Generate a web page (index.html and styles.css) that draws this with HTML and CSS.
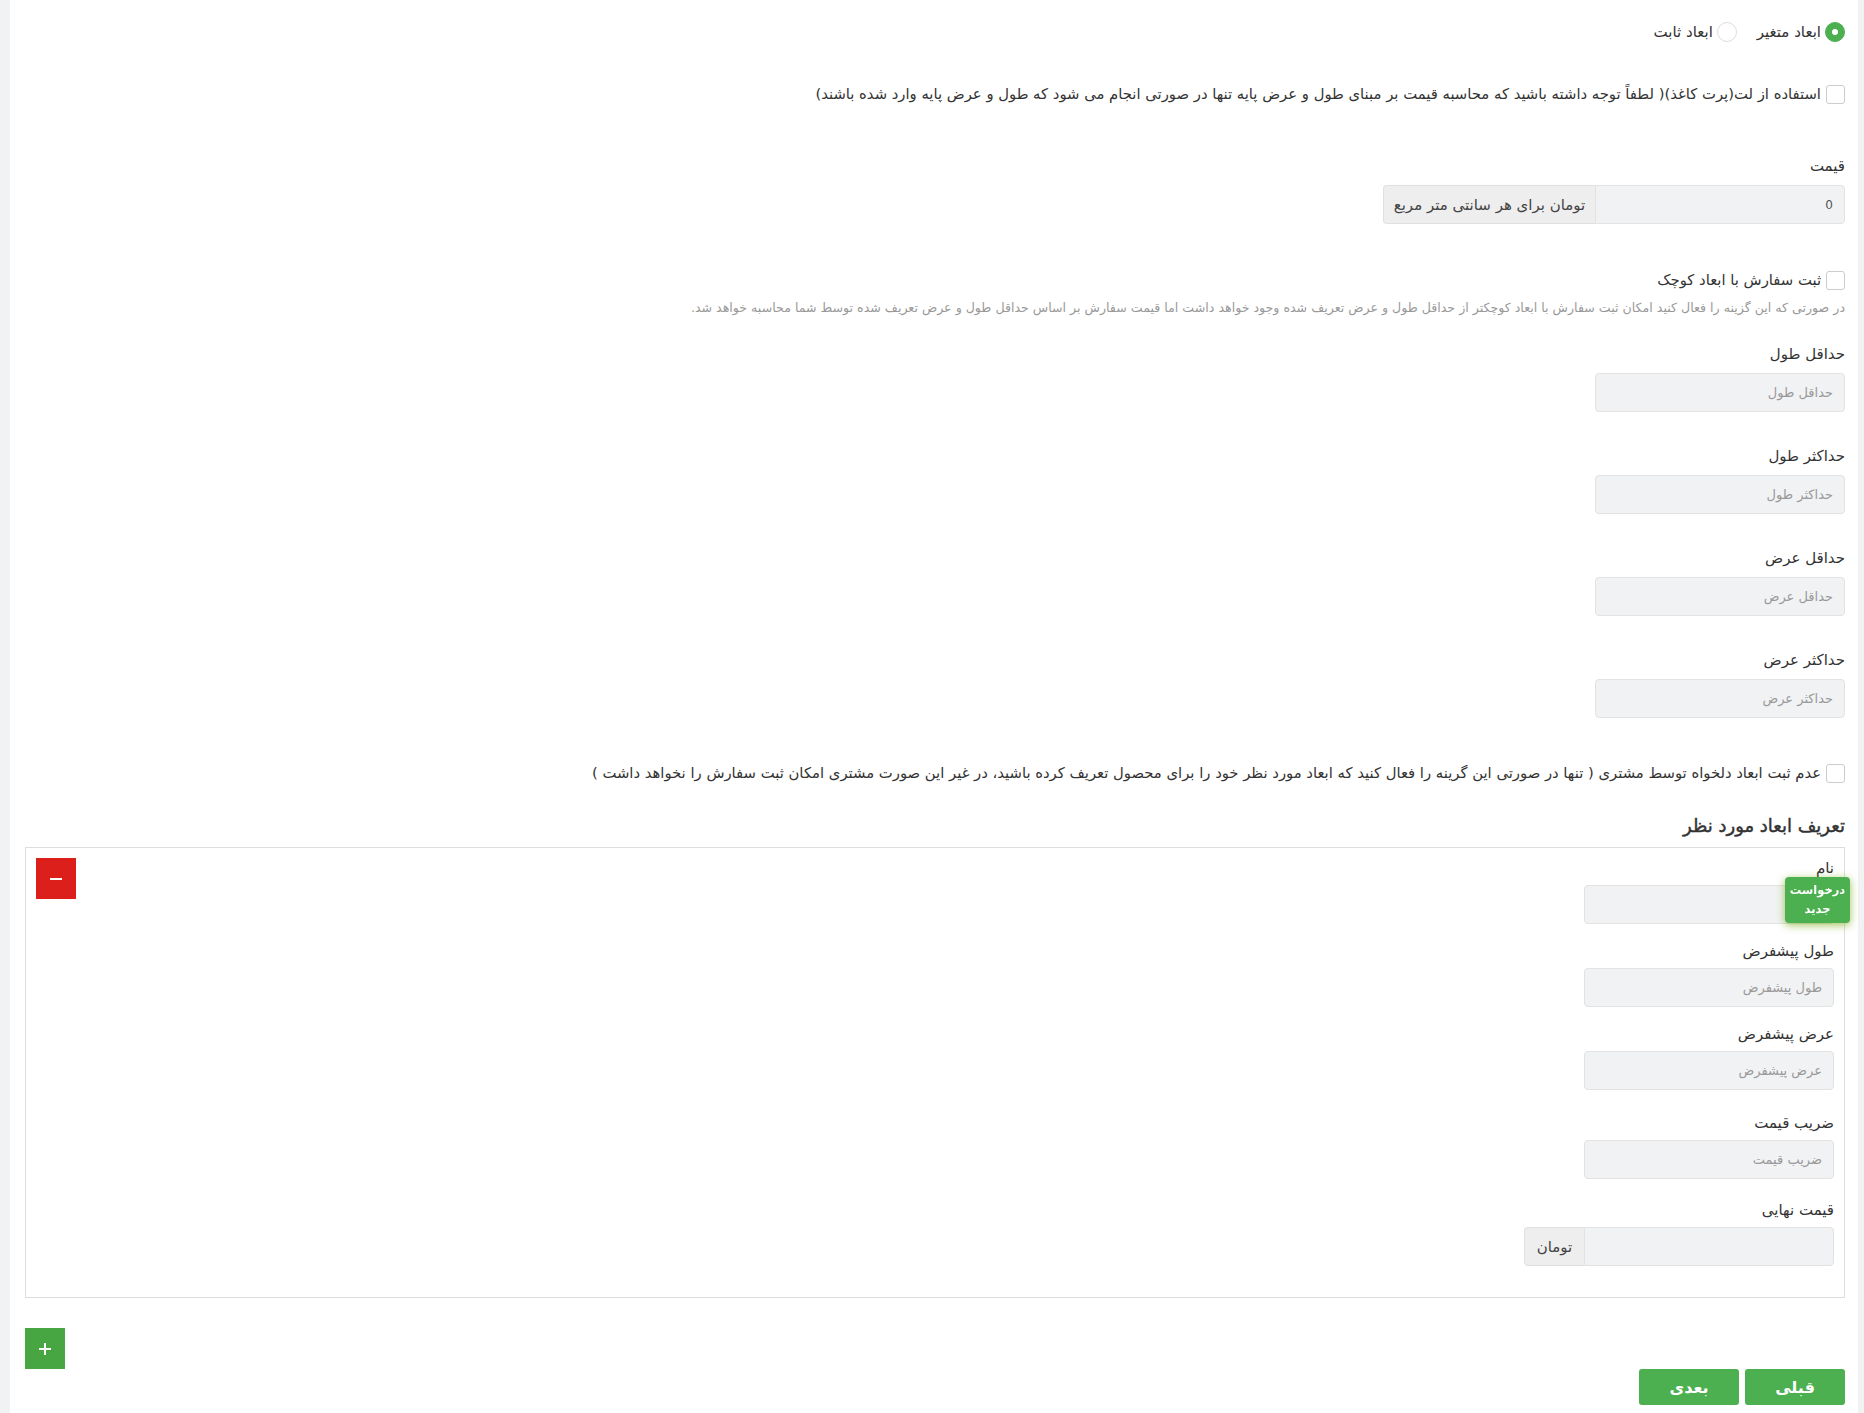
FILE: index.html
```html
<!DOCTYPE html>
<html lang="fa" dir="rtl">
<head>
<meta charset="utf-8">
<title>ابعاد</title>
<link rel="stylesheet" href="styles.css">
</head>
<body>
<div class="page">
  <div class="radio-row">
    <label class="radio-item"><span class="radio checked"></span>ابعاد متغیر</label>
    <label class="radio-item"><span class="radio"></span>ابعاد ثابت</label>
  </div>

  <label class="check-row first-check"><span class="checkbox"></span>استفاده از لت(پرت کاغذ)( لطفاً توجه داشته باشید که محاسبه قیمت بر مبنای طول و عرض پایه تنها در صورتی انجام می شود که طول و عرض پایه وارد شده باشند)</label>

  <div class="field price-field">
    <div class="label">قیمت</div>
    <div class="input-group">
      <div class="input ltr-value">0</div>
      <div class="addon addon-wide">تومان برای هر سانتی متر مربع</div>
    </div>
  </div>

  <label class="check-row small-check"><span class="checkbox"></span>ثبت سفارش با ابعاد کوچک</label>
  <div class="help">در صورتی که این گزینه را فعال کنید امکان ثبت سفارش با ابعاد کوچکتر از حداقل طول و عرض تعریف شده وجود خواهد داشت اما قیمت سفارش بر اساس حداقل طول و عرض تعریف شده توسط شما محاسبه خواهد شد.</div>

  <div class="field first-dim">
    <div class="label">حداقل طول</div>
    <div class="input placeholder">حداقل طول</div>
  </div>
  <div class="field">
    <div class="label">حداکثر طول</div>
    <div class="input placeholder">حداکثر طول</div>
  </div>
  <div class="field">
    <div class="label">حداقل عرض</div>
    <div class="input placeholder">حداقل عرض</div>
  </div>
  <div class="field">
    <div class="label">حداکثر عرض</div>
    <div class="input placeholder">حداکثر عرض</div>
  </div>

  <label class="check-row third-check"><span class="checkbox"></span>عدم ثبت ابعاد دلخواه توسط مشتری ( تنها در صورتی این گرینه را فعال کنید که ابعاد مورد نظر خود را برای محصول تعریف کرده باشید، در غیر این صورت مشتری امکان ثبت سفارش را نخواهد داشت )</label>

  <h3 class="section-title">تعریف ابعاد مورد نظر</h3>

  <div class="dim-box">
    <div class="dim-fields">
      <div class="bfield">
        <div class="label">نام</div>
        <div class="input"></div>
      </div>
      <div class="bfield">
        <div class="label">طول پیشفرض</div>
        <div class="input placeholder">طول پیشفرض</div>
      </div>
      <div class="bfield gap-after">
        <div class="label">عرض پیشفرض</div>
        <div class="input placeholder">عرض پیشفرض</div>
      </div>
      <div class="bfield gap-after2">
        <div class="label">ضریب قیمت</div>
        <div class="input placeholder">ضریب قیمت</div>
      </div>
      <div class="bfield">
        <div class="label">قیمت نهایی</div>
        <div class="input-group final-group">
          <div class="input"></div>
          <div class="addon addon-small">تومان</div>
        </div>
      </div>
    </div>
    <button class="btn-sq btn-red" type="button"><span class="minus"></span></button>
  </div>

  <div class="add-row">
    <button class="btn-sq btn-green" type="button"><span class="plus"></span></button>
  </div>

  <div class="nav-row">
    <button class="btn-nav" type="button">قبلی</button>
    <button class="btn-nav" type="button">بعدی</button>
  </div>
</div>

<div class="float-badge">درخواست<br>جدید</div>
</body>
</html>
```

FILE: styles.css
```css
* { box-sizing: border-box; }
html, body { margin: 0; padding: 0; }
body {
  background: #f1f2f4;
  font-family: "DejaVu Sans", "Noto Sans", sans-serif;
  color: #333;
  font-size: 15px;
  min-height: 1413px;
}
.page {
  background: #fff;
  margin-left: 10px;
  margin-right: 6px;
  min-height: 1413px;
  padding: 22px 13px 7px 15px;
}
.radio-row {
  display: flex;
  gap: 20px;
  height: 20px;
  align-items: center;
}
.radio-item {
  display: flex;
  align-items: center;
  gap: 4px;
  font-size: 15px;
  line-height: 20px;
}
.radio {
  width: 20px;
  height: 20px;
  border-radius: 50%;
  border: 1px solid #ddd;
  background: #fff;
  display: inline-block;
  position: relative;
}
.radio.checked {
  background: #4caf50;
  border-color: #4caf50;
}
.radio.checked::after {
  content: "";
  position: absolute;
  width: 6px;
  height: 6px;
  border-radius: 50%;
  background: #fff;
  left: 6px;
  top: 6px;
}
.check-row {
  display: flex;
  align-items: center;
  gap: 5px;
  font-size: 14.8px;
  line-height: 20px;
}
.checkbox {
  width: 19px;
  height: 19px;
  border: 1px solid #ccc;
  border-radius: 3px;
  background: #fff;
  flex: none;
}
.first-check { margin-top: 42px; }
.label {
  line-height: 20px;
  height: 20px;
  font-size: 15px;
  margin-bottom: 9px;
}
.input {
  width: 250px;
  height: 39px;
  background: #f1f2f4;
  border: 1px solid #e2e2e2;
  border-radius: 4px;
  padding: 0 11px;
  display: flex;
  align-items: center;
  font-size: 13px;
  color: #555;
  flex: none;
}
.placeholder { color: #999; }
.input-group {
  display: flex;
}
.input-group .input {
  border-radius: 0 4px 4px 0;
}
.ltr-value { font-size: 12px; }
.addon {
  height: 39px;
  background: #eee;
  border: 1px solid #e0e0e0;
  border-right: 0;
  border-radius: 4px 0 0 4px;
  display: flex;
  align-items: center;
  justify-content: center;
  font-size: 15px;
  color: #444;
  flex: none;
}
.addon-wide { width: 212px; }
.addon-small { width: 60px; }
.field { margin-top: 34px; }
.field.price-field { margin-top: 52px; }
.small-check { margin-top: 46px; }
.help {
  margin-top: 10px;
  font-size: 12.6px;
  line-height: 16px;
  color: #999;
}
.field.first-dim { margin-top: 28px; }
.third-check { margin-top: 45px; }
.section-title {
  margin: 31px 0 0 0;
  font-size: 18px;
  line-height: 24px;
  font-weight: normal;
  -webkit-text-stroke: 0.45px #333;
  color: #333;
}
.dim-box {
  margin-top: 9px;
  border: 1px solid #ddd;
  padding: 10px 10px 31px 10px;
  display: flex;
  justify-content: space-between;
  align-items: flex-start;
}
.dim-fields { width: 250px; }
.bfield .label { margin-bottom: 7px; }
.bfield + .bfield { margin-top: 17px; }
.bfield.gap-after + .bfield { margin-top: 23px; }
.bfield.gap-after2 + .bfield { margin-top: 21px; }
.final-group { width: 310px; }
.btn-sq {
  width: 40px;
  height: 41px;
  border: 0;
  padding: 0;
  display: flex;
  align-items: center;
  justify-content: center;
  cursor: pointer;
}
.btn-red { background: #dc1f1a; }
.btn-green { background: #47a641; }
.minus {
  width: 12px;
  height: 2px;
  background: #fff;
  display: block;
}
.plus {
  width: 12px;
  height: 12px;
  position: relative;
  display: block;
}
.plus::before, .plus::after {
  content: "";
  position: absolute;
  background: #fff;
}
.plus::before { left: 0; right: 0; top: 5px; height: 2px; }
.plus::after { top: 0; bottom: 0; left: 5px; width: 2px; }
.add-row {
  margin-top: 30px;
  display: flex;
  justify-content: flex-end;
}
.nav-row {
  display: flex;
  gap: 6px;
}
.btn-nav {
  width: 100px;
  height: 36px;
  border: 0;
  border-radius: 3px;
  background: #4caf50;
  color: #fff;
  font-family: "DejaVu Sans", sans-serif;
  font-size: 16px;
  font-weight: bold;
}
.float-badge {
  position: fixed;
  top: 877px;
  right: 14px;
  width: 65px;
  height: 46px;
  background: #4caf50;
  border-radius: 4px;
  color: #fff;
  font-size: 11.5px;
  font-weight: bold;
  line-height: 19px;
  text-align: center;
  padding-top: 4px;
  box-shadow: 0 2px 8px rgba(120, 170, 20, 0.7);
}
```
